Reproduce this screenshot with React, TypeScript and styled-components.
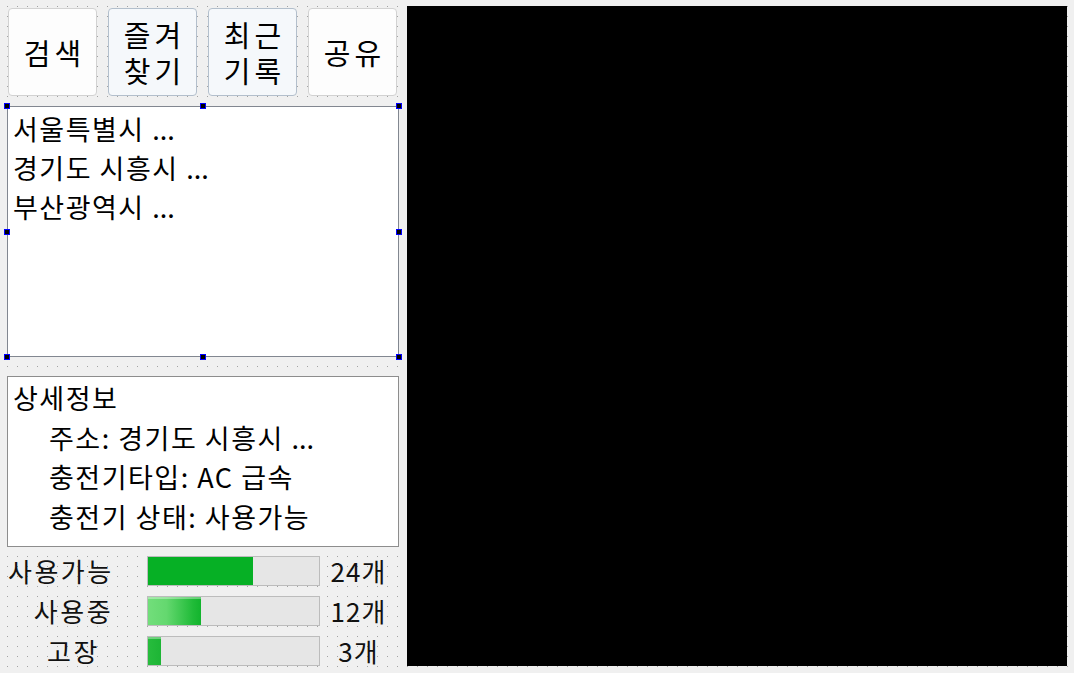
import React from "react";
import styled, { createGlobalStyle } from "styled-components";

const Global = createGlobalStyle`
  html, body { margin: 0; padding: 0; }
  body {
    width: 1074px;
    height: 673px;
    overflow: hidden;
    background-color: #a3a3a3;
    background-image:
      linear-gradient(to right, transparent 1px, #f0f0f0 1px),
      linear-gradient(to bottom, transparent 1px, #f0f0f0 1px);
    background-size: 10px 10px;
    background-position: 7px 6px;
    font-family: "Noto Sans CJK KR", "Noto Sans", sans-serif;
    color: #000;
  }
`;

const Page = styled.div`
  display: flex;
  gap: 8px;
  padding: 6px 7px 0 7px;
  height: 673px;
  box-sizing: border-box;
`;

const LeftColumn = styled.div`
  width: 392px;
  display: flex;
  flex-direction: column;
  flex-shrink: 0;
`;

const ButtonRow = styled.div`
  display: flex;
  gap: 11px;
  margin-top: 2px;
  padding-left: 1px;
`;

const ToolButton = styled.button<{ $tinted?: boolean }>`
  width: 89px;
  height: 88px;
  box-sizing: border-box;
  border-radius: 4px;
  border: 1px solid ${(p) => (p.$tinted ? "#b3bfcc" : "#d2d2d2")};
  background: ${(p) => (p.$tinted ? "#f5f8fb" : "#fdfdfd")};
  font-family: "Noto Sans CJK KR", sans-serif;
  font-size: 29px;
  line-height: 36px;
  color: #000;
  padding: 0 0 0 4px;
  display: flex;
  flex-direction: column;
  align-items: center;
  justify-content: center;
  text-align: center;
  letter-spacing: 4px;
`;

const ButtonLine = styled.span`
  display: block;
  white-space: nowrap;
`;

const ListWrap = styled.div`
  position: relative;
  margin-top: 10px;
  height: 251px;
`;

const ListBox = styled.div`
  height: 100%;
  box-sizing: border-box;
  border: 1px solid #828790;
  background: #fff;
  padding: 2px 5px;
  display: flex;
  flex-direction: column;
`;

const ListItem = styled.div`
  font-size: 27px;
  line-height: 39px;
  letter-spacing: 1.5px;
  white-space: nowrap;
`;

const Ellipsis = styled.span`
  letter-spacing: 0;
`;

const Handle = styled.span`
  position: absolute;
  width: 4px;
  height: 4px;
  background: #000;
  border: 1px solid #0000ff;
  transform: translate(-50%, -50%);
`;

const Details = styled.div`
  margin-top: 19px;
  height: 171px;
  box-sizing: border-box;
  border: 1px solid #8d8d8d;
  background: #fff;
  padding: 1px 5px;
`;

const DetailLine = styled.div<{ $indent?: boolean }>`
  font-size: 27px;
  line-height: 39.5px;
  letter-spacing: 1.5px;
  white-space: nowrap;
  padding-left: ${(p) => (p.$indent ? "36px" : "0")};
`;

const Stats = styled.div`
  margin-top: 4px;
  display: flex;
  flex-direction: column;
`;

const StatRow = styled.div`
  display: grid;
  grid-template-columns: 140px 173px 75px;
  align-items: center;
  height: 40px;
`;

const StatLabel = styled.div<{ $align: "left" | "center" }>`
  font-size: 26px;
  line-height: 30px;
  letter-spacing: 2.5px;
  color: #111;
  text-align: ${(p) => p.$align};
  padding: ${(p) => (p.$align === "left" ? "0 0 0 1px" : "0 7px 0 0")};
  white-space: nowrap;
`;

const Track = styled.div`
  height: 30px;
  box-sizing: border-box;
  border: 1px solid #bcbcbc;
  background: #e6e6e6;
  display: flex;
`;

const Fill = styled.div<{ $variant: "solid" | "glow" | "edge" }>`
  height: 100%;
  background: ${(p) =>
    p.$variant === "solid"
      ? "#06b025"
      : p.$variant === "glow"
      ? "linear-gradient(to right, #72de7b 0%, #64d86f 35%, #20bb38 85%, #12b42d 100%)"
      : "linear-gradient(to right, #27bc3d, #1db535)"};
  box-shadow: ${(p) =>
    p.$variant === "solid" ? "none" : "inset 0 2px 0 rgba(255,255,255,0.35)"};
`;

const StatCount = styled.div`
  font-size: 26px;
  line-height: 30px;
  letter-spacing: 1px;
  text-align: center;
  color: #111;
  padding-left: 2px;
`;

const Viewport = styled.div`
  width: 660px;
  height: 660px;
  background: #000;
  flex-shrink: 0;
`;

const handles: Array<[string, string]> = [
  ["0%", "0%"],
  ["50%", "0%"],
  ["100%", "0%"],
  ["0%", "50%"],
  ["100%", "50%"],
  ["0%", "100%"],
  ["50%", "100%"],
  ["100%", "100%"],
];

const stats = [
  { label: "사용가능", count: 24, align: "left" as const, variant: "solid" as const },
  { label: "사용중", count: 12, align: "center" as const, variant: "glow" as const },
  { label: "고장", count: 3, align: "center" as const, variant: "edge" as const },
];
const total = 39;

const buttons = [
  { lines: ["검색"], tinted: false },
  { lines: ["즐겨", "찾기"], tinted: true },
  { lines: ["최근", "기록"], tinted: true },
  { lines: ["공유"], tinted: false },
];

const places = ["서울특별시", "경기도 시흥시", "부산광역시"];

export default function App() {
  return (
    <>
      <Global />
      <Page>
        <LeftColumn>
          <ButtonRow>
            {buttons.map((b) => (
              <ToolButton key={b.lines.join("")} $tinted={b.tinted}>
                {b.lines.map((l) => (
                  <ButtonLine key={l}>{l}</ButtonLine>
                ))}
              </ToolButton>
            ))}
          </ButtonRow>
          <ListWrap>
            <ListBox>
              {places.map((p) => (
                <ListItem key={p}>
                  {p} <Ellipsis>...</Ellipsis>
                </ListItem>
              ))}
            </ListBox>
            {handles.map(([l, t], i) => (
              <Handle key={i} style={{ left: l, top: t }} />
            ))}
          </ListWrap>
          <Details>
            <DetailLine>상세정보</DetailLine>
            <DetailLine $indent>
              주소: 경기도 시흥시 <Ellipsis>...</Ellipsis>
            </DetailLine>
            <DetailLine $indent>충전기타입: AC 급속</DetailLine>
            <DetailLine $indent>충전기 상태: 사용가능</DetailLine>
          </Details>
          <Stats>
            {stats.map((s) => (
              <StatRow key={s.label}>
                <StatLabel $align={s.align}>{s.label}</StatLabel>
                <Track>
                  <Fill
                    $variant={s.variant}
                    style={{ width: `${(s.count / total) * 100}%` }}
                  />
                </Track>
                <StatCount>{s.count}개</StatCount>
              </StatRow>
            ))}
          </Stats>
        </LeftColumn>
        <Viewport />
      </Page>
    </>
  );
}
